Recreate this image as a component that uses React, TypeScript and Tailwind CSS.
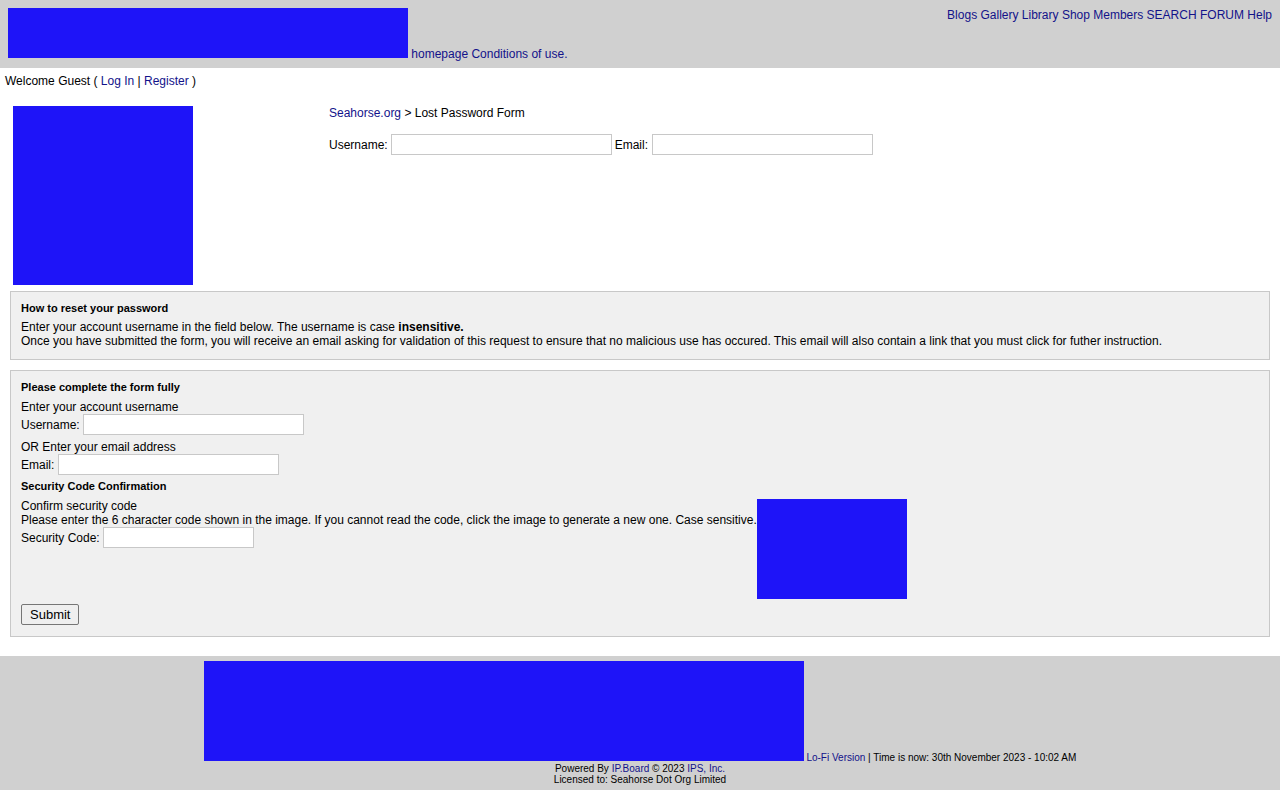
import React from 'react';

// placeholder colour for the missing images
const BLUE = 'bg-[#1e14f8]';

const linkCls = 'text-[#12128a] hover:underline';

function TextInput({ width }: { width: string }) {
  return (
    <input
      type="text"
      className={`${width} h-[21px] border border-[#c8c8c8] bg-white px-1 text-[12px] outline-none`}
    />
  );
}

export default function App() {
  const nav = ['Blogs', 'Gallery', 'Library', 'Shop', 'Members', 'SEARCH', 'FORUM', 'Help'];

  return (
    <div className="min-h-[790px] bg-white font-['Liberation_Sans',Arial,sans-serif] text-[12px] leading-[14px] text-black">
      {/* header */}
      <header className="flex items-start justify-between bg-[#d0d0d0] px-2 pt-2 pb-[7px]">
        <div>
          <div className={`inline-block h-[50px] w-[400px] align-baseline ${BLUE}`} />{' '}
          <a href="#" className={linkCls}>homepage</a>{' '}
          <a href="#" className={linkCls}>Conditions of use.</a>
        </div>
        <div>
          {nav.map((n, i) => (
            <React.Fragment key={n}>
              {i > 0 && ' '}
              <a href="#" className={linkCls}>{n}</a>
            </React.Fragment>
          ))}
        </div>
      </header>

      {/* welcome bar */}
      <div className="px-[5px] pt-[6px]">
        Welcome Guest ( <a href="#" className={linkCls}>Log In</a> | <a href="#" className={linkCls}>Register</a> )
      </div>

      {/* logo + breadcrumb */}
      <div className="flex">
        <div className="w-[329px] shrink-0 pl-[13px] pt-[18px]">
          <div className={`h-[179px] w-[180px] ${BLUE}`} />
        </div>
        <div className="pt-[18px]">
          <div>
            <a href="#" className={linkCls}>Seahorse.org</a> &gt; Lost Password Form
          </div>
          <div className="mt-[14px] flex items-center">
            <span className="mr-[3px]">Username:</span>
            <TextInput width="w-[221px]" />
            <span className="ml-[3px] mr-[4px]">Email:</span>
            <TextInput width="w-[221px]" />
          </div>
        </div>
      </div>

      {/* instructions */}
      <div className="mx-[10px] mt-[6px] border border-[#c8c8c8] bg-[#f0f0f0] px-[10px] pt-[9px] pb-[11px]">
        <div className="text-[11px] font-bold">How to reset your password</div>
        <div className="mt-[5px]">
          Enter your account username in the field below. The username is case <b>insensitive.</b>
          <br />
          Once you have submitted the form, you will receive an email asking for validation of this request to ensure that no malicious use has occured. This email will also contain a link that you must click for futher instruction.
        </div>
      </div>

      {/* form */}
      <div className="mx-[10px] mt-[10px] border border-[#c8c8c8] bg-[#f0f0f0] px-[10px] pt-[9px] pb-[11px]">
        <div className="text-[11px] font-bold">Please complete the form fully</div>
        <div className="mt-[6px]">Enter your account username</div>
        <div className="flex items-center">
          <span className="mr-[3px]">Username:</span>
          <TextInput width="w-[221px]" />
        </div>
        <div className="mt-[5px]">OR Enter your email address</div>
        <div className="flex items-center">
          <span className="mr-[4px]">Email:</span>
          <TextInput width="w-[221px]" />
        </div>
        <div className="mt-[4px] text-[11px] font-bold">Security Code Confirmation</div>
        <div className="mt-[6px] flex items-start">
          <div>
            <div>Confirm security code</div>
            <div>Please enter the 6 character code shown in the image. If you cannot read the code, click the image to generate a new one. Case sensitive.</div>
            <div className="flex items-center">
              <span className="mr-[3px]">Security Code:</span>
              <TextInput width="w-[151px]" />
            </div>
          </div>
          <div className={`h-[100px] w-[150px] shrink-0 ${BLUE}`} />
        </div>
        <button
          type="button"
          className="mt-[5px] h-[21px] rounded-[2px] border border-[#767676] bg-[#efefef] px-[8px] text-[13px] leading-[15px] text-black"
        >
          Submit
        </button>
      </div>

      {/* footer */}
      <footer className="mt-[19px] bg-[#d0d0d0] pt-[5px] pb-[5px] text-center text-[10px] leading-[11px]">
        <div>
          <div className={`inline-block h-[100px] w-[600px] align-baseline ${BLUE}`} />{' '}
          <a href="#" className={linkCls}>Lo-Fi Version</a> | Time is now: 30th November 2023 - 10:02 AM
        </div>
        <div>
          Powered By <a href="#" className={linkCls}>IP.Board</a> © 2023 <a href="#" className={linkCls}>IPS, Inc.</a>
        </div>
        <div>Licensed to: Seahorse Dot Org Limited</div>
      </footer>
    </div>
  );
}
